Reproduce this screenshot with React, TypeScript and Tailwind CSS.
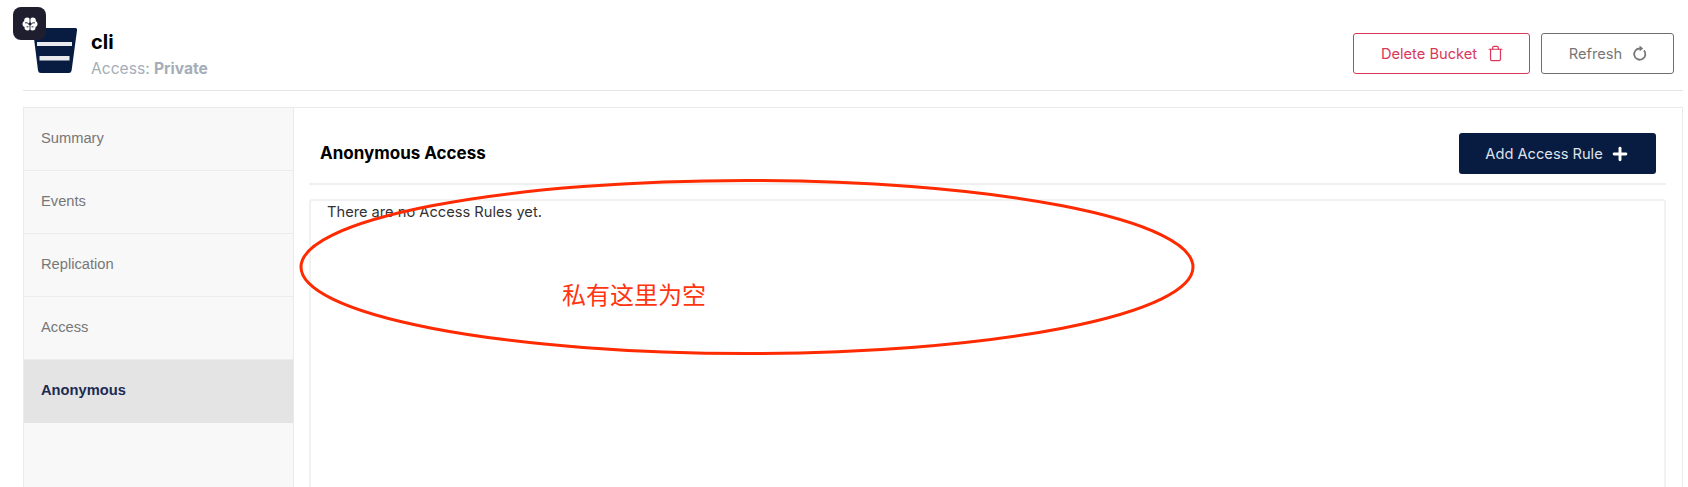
import { Plus, Trash } from "lucide-react";

const tabs = ["Summary", "Events", "Replication", "Access", "Anonymous"];

function BrainIcon() {
  return (
    <svg width="16" height="16" viewBox="0 0 16 16">
      <g fill="#ffffff">
        <circle cx="5.200" cy="4.500" r="3" />
        <circle cx="10.800" cy="4.500" r="3" />
        <circle cx="3.500" cy="8" r="3" />
        <circle cx="12.500" cy="8" r="3" />
        <circle cx="5.500" cy="11.500" r="3" />
        <circle cx="10.500" cy="11.500" r="3" />
      </g>
      <path
        d="M8 1.500v13M3 6.800h2.500l1 1.400M13 6.800h-2.500l-1 1.400M4.500 10.800h2M11.500 10.800h-2"
        fill="none"
        stroke="#1e1e2f"
        strokeWidth="0.900"
      />
    </svg>
  );
}

function BucketIcon() {
  return (
    <svg width="44" height="45" viewBox="0 0 44 45" className="shrink-0">
      <path d="M2 0h40a2 2 0 0 1 2 2.400l-5.400 40a3 3 0 0 1-3 2.600H8a3 3 0 0 1-3-2.600L0 2.400A2 2 0 0 1 2 0z" fill="#081c42" />
      <rect x="4" y="14" width="35" height="4" fill="#e8eaee" />
      <rect x="6.500" y="28" width="30" height="4.500" fill="#e8eaee" />
    </svg>
  );
}

function RefreshIcon() {
  return (
    <svg width="16" height="17" viewBox="0 0 16 17" className="shrink-0">
      <path d="M11.900 5.300A5.600 5.600 0 1 1 8 3.500" fill="none" stroke="#777777" strokeWidth="1.800" />
      <path d="M7.600 0.400v6.200l3.600-3.100z" fill="#777777" />
    </svg>
  );
}

export default function App() {
  return (
    <div className="relative h-[487px] w-[1688px] overflow-hidden bg-white font-['Inter',sans-serif]">
      <div className="absolute left-[13px] top-[7px] flex h-[33px] w-[33px] items-center justify-center rounded-lg bg-[#1e1e2f]">
        <BrainIcon />
      </div>

      <div className="pl-[23px] pr-[5px]">
        <header className="flex h-[91px] items-start justify-between border-b border-[#e5e5e5] pr-[9px]">
          <div className="flex items-start pl-[10px] pt-[28px]">
            <BucketIcon />
            <div className="pl-[14px] pt-[1px]">
              <h1 className="text-xl font-bold leading-[26px] text-black">cli</h1>
              <p className="mt-1 text-[15.6px] leading-5 text-[#a5adb8]">
                Access: <span className="font-bold">Private</span>
              </p>
            </div>
          </div>
          <div className="flex gap-[11px] pt-[33px]">
            <button className="flex h-[41px] w-[177px] items-center justify-center gap-[10px] rounded-[3px] border border-[#d9375b] pl-[2px] text-[14.67px] text-[#d9375b]">
              Delete Bucket
              <Trash size={17} strokeWidth={1.7} />
            </button>
            <button className="flex h-[41px] w-[133px] items-center justify-center gap-[10px] rounded-[3px] border border-[#6f6f6f] pl-[2px] text-[14.67px] text-[#777777]">
              Refresh
              <RefreshIcon />
            </button>
          </div>
        </header>

        <div className="mt-4 flex h-[400px] border border-[#eaeaea]">
          <nav className="w-[270px] shrink-0 border-r border-[#eaeaea] bg-[#f8f8f8] font-['Liberation_Sans',sans-serif] text-[14.7px]">
            {tabs.map((tab) => (
              <div
                key={tab}
                className={
                  tab === "Anonymous"
                    ? "flex h-[63px] items-center bg-[#e4e4e4] pb-[2px] pl-[17px] font-bold text-[#1c2b52]"
                    : "flex h-[63px] items-center border-b border-[#ececec] pb-[2px] pl-[17px] text-[#777777]"
                }
              >
                {tab}
              </div>
            ))}
          </nav>

          <main className="min-w-0 flex-1 pl-[15px] pr-4">
            <div className="flex h-[77px] items-center justify-between border-b-2 border-[#f0f0f0] pl-[11px] pr-[10px] pt-4">
              <h2 className="text-[17px] font-bold text-black">Anonymous Access</h2>
              <button className="flex h-[41px] w-[197px] items-center justify-center gap-[7px] rounded-[3px] bg-[#081c42] text-[14.67px] text-[#dfe3ea]">
                Add Access Rule
                <Plus size={20} color="#ffffff" strokeWidth={3.5} />
              </button>
            </div>
            <div className="mt-[14px] h-[300px] rounded-[3px] border-2 border-[#f1f1f1] pl-[16px] pt-[1px] text-[14.67px] leading-5 text-[#333333]">
              There are no Access Rules yet.
            </div>
          </main>
        </div>
      </div>

      {/* red annotation drawn over the screenshot */}
      <svg width="1688" height="487" className="pointer-events-none absolute left-0 top-0">
        <ellipse cx="747" cy="267" rx="446" ry="86.500" fill="none" stroke="#ff2a00" strokeWidth="3" />
      </svg>
      <div className="absolute left-[562px] top-[278px] font-['Noto_Sans_CJK_SC',sans-serif] text-2xl leading-8 text-[#ff3510]">
        私有这里为空
      </div>
    </div>
  );
}
